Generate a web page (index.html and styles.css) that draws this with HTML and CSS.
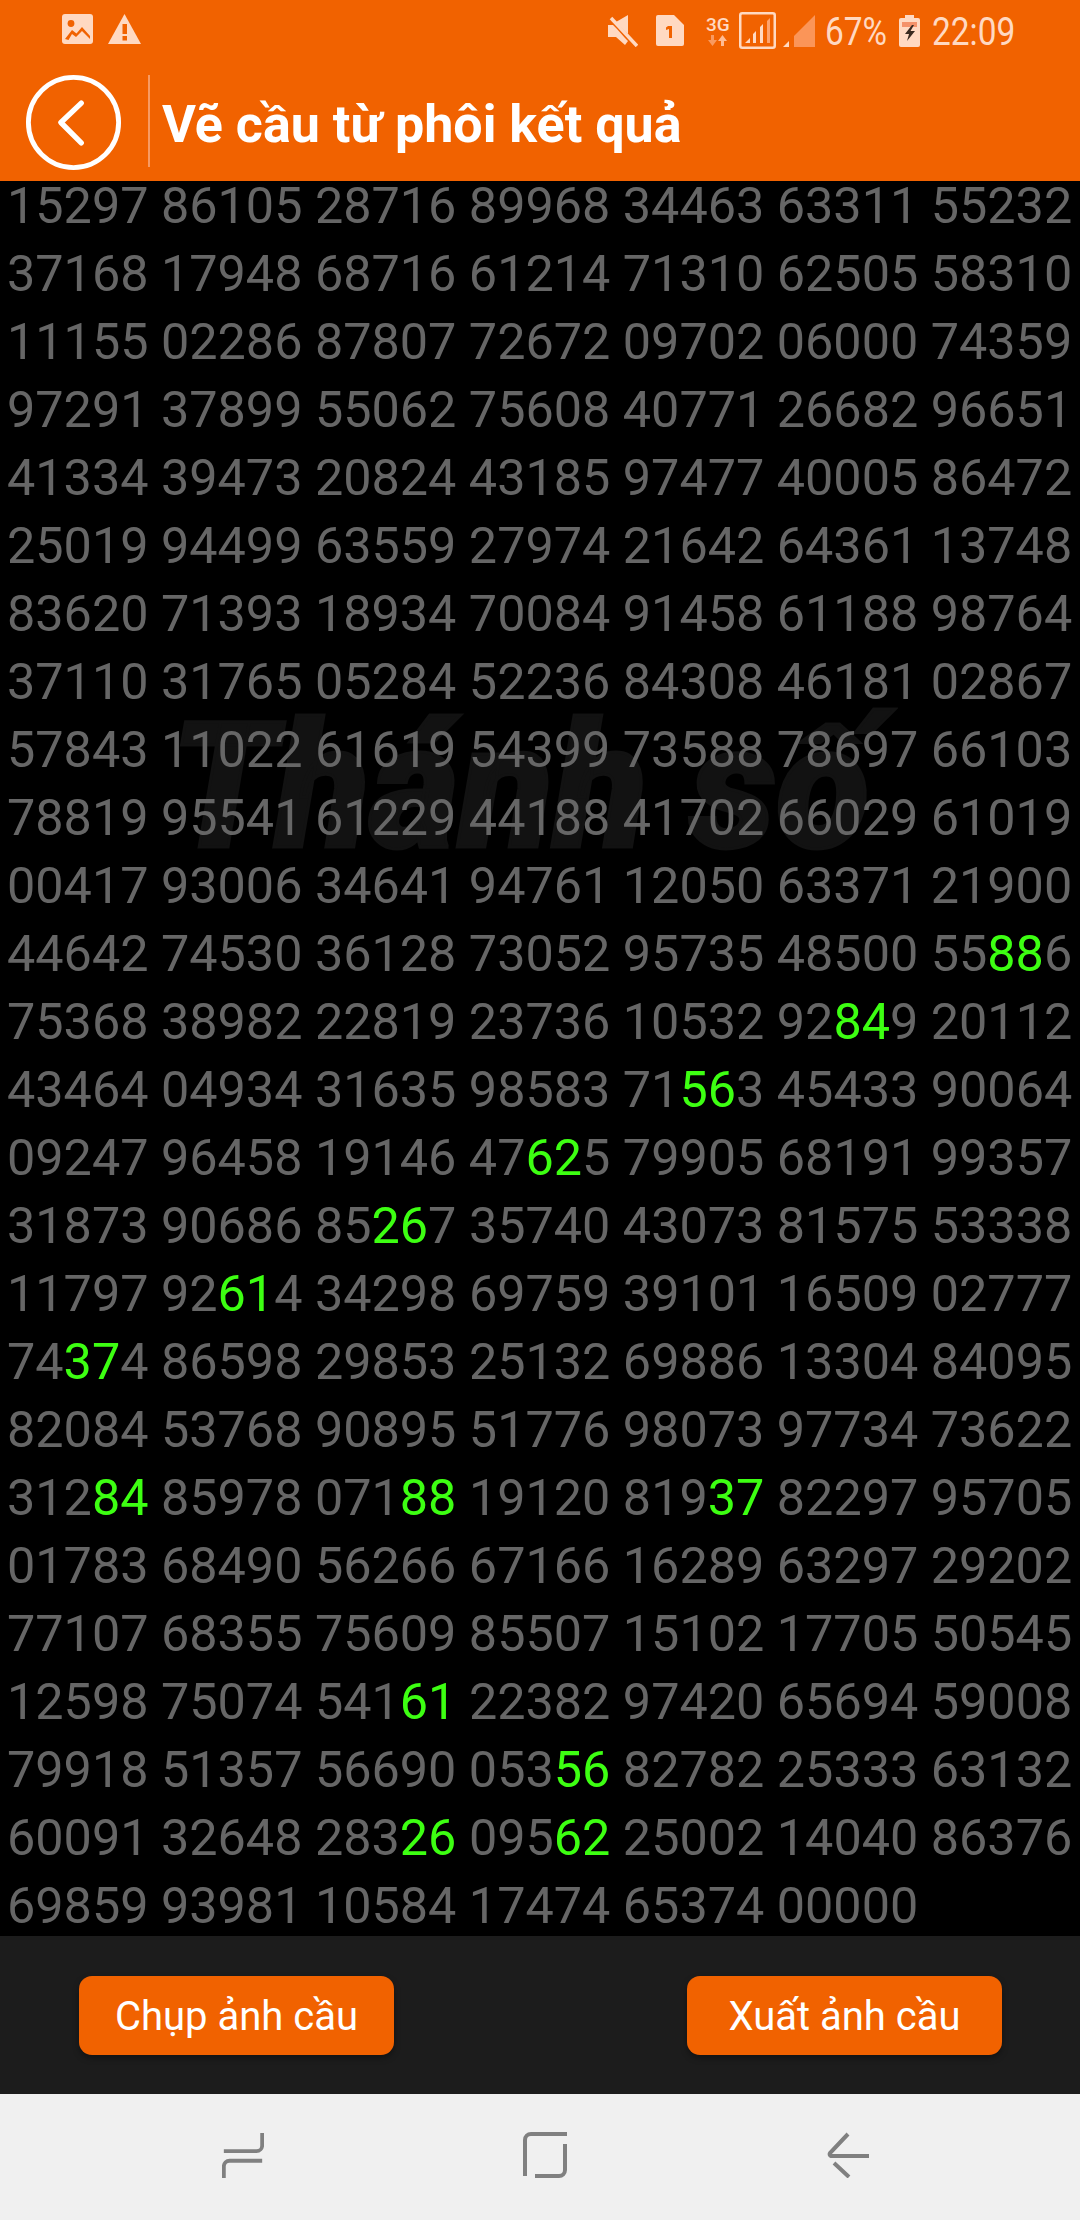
FILE: index.html
```html
<!DOCTYPE html>
<html lang="vi">
<head>
<meta charset="utf-8">
<title>Vẽ cầu từ phôi kết quả</title>
<link rel="stylesheet" href="styles.css">
</head>
<body>
<div class="app">
  <header class="header">
    <div class="status">
      <div class="status-left">
        <svg class="ic-photo" viewBox="0 0 31 30"><path fill="#ffd9c2" d="M3 0h25a3 3 0 0 1 3 3v24a3 3 0 0 1-3 3H3a3 3 0 0 1-3-3V3a3 3 0 0 1 3-3z"/><circle cx="9" cy="9.500" r="3.400" fill="#f16200"/><path fill="#f16200" d="M3 25l7-9 4.500 3.500L20 13l8 9v3l-8-8-6 6-4-3-3.500 6z"/></svg>
        <svg class="ic-warn" viewBox="0 0 33 30"><path fill="#ffd9c2" d="M16.500 0l16.500 30H0z"/><rect x="14.500" y="10" width="4.500" height="10" fill="#f16200"/><rect x="14.500" y="22" width="4.500" height="4.500" fill="#f16200"/></svg>
      </div>
      <div class="status-right">
        <svg class="ic-mute" viewBox="0 0 30 32"><path fill="#ffd9c2" d="M0 10h5l4 4 0 0 8 9v0l3 3-3 4-9-8H0zM8 7l12-7v19z"/><path stroke="#ffd9c2" stroke-width="3.500" d="M3 3l26 28"/></svg>
        <svg class="ic-sim" viewBox="0 0 28 31"><path fill="#ffd9c2" d="M2 0h16l10 10v19a2 2 0 0 1-2 2H2a2 2 0 0 1-2-2V2a2 2 0 0 1 2-2z"/><path fill="#f16200" d="M12 11h4v12h-3v-9l-3 1v-2.500z"/></svg>
        <div class="net"><span class="net-label">3G</span>
          <svg class="ic-arrows" viewBox="0 0 20 11"><path fill="#f99a5f" d="M3 0h3v5h3l-4.500 6L0 5h3z"/><path fill="#ffbb93" d="M13 6v5h3V6h3l-4.500-6L10 6z"/></svg>
        </div>
        <svg class="ic-signal" viewBox="0 0 37 37"><rect x="1.250" y="1.250" width="34.500" height="34.500" rx="2" fill="none" stroke="#ffd9c2" stroke-width="2.500"/><path fill="#ffd9c2" d="M6 31l5-5v5zM14 31v-9l3-3v12zM21 31V15l3-3v19z"/><path fill="#fda46f" d="M28 31V9l3-3v25z"/></svg>
        <svg class="ic-signal2" viewBox="0 0 32 32"><path fill="#ffd9c2" d="M0 32l6-6v6z"/><path fill="#fb9558" d="M11 32V21L32 0v32z"/></svg>
        <span class="stat-text pct">67%</span>
        <svg class="ic-batt" viewBox="0 0 21 32"><path fill="#ffd9c2" d="M6 0h9v3h4a2 2 0 0 1 2 2v25a2 2 0 0 1-2 2H2a2 2 0 0 1-2-2V5a2 2 0 0 1 2-2h4z"/><rect x="3" y="7" width="15" height="5" fill="#f4926a"/><path fill="#3a2a20" d="M13 10L6 19h4l-2 7 8-10h-4.500l3.500-6z"/></svg>
        <span class="stat-text clock">22:09</span>
      </div>
    </div>
    <div class="toolbar">
      <div class="back">
        <svg class="ic-back" viewBox="0 0 100 100"><circle cx="50" cy="50" r="46.500" fill="none" stroke="#fff" stroke-width="5"/><path d="M58 30L37 50l21 21" fill="none" stroke="#fff" stroke-width="5.500" stroke-linecap="round" stroke-linejoin="round"/></svg>
      </div>
      <div class="sep"></div>
      <h1 class="title">Vẽ cầu từ phôi kết quả</h1>
    </div>
  </header>

  <main class="board">
    <div class="mark">Thánh số</div>
    <div class="row">15297 86105 28716 89968 34463 63311 55232</div>
    <div class="row">37168 17948 68716 61214 71310 62505 58310</div>
    <div class="row">11155 02286 87807 72672 09702 06000 74359</div>
    <div class="row">97291 37899 55062 75608 40771 26682 96651</div>
    <div class="row">41334 39473 20824 43185 97477 40005 86472</div>
    <div class="row">25019 94499 63559 27974 21642 64361 13748</div>
    <div class="row">83620 71393 18934 70084 91458 61188 98764</div>
    <div class="row">37110 31765 05284 52236 84308 46181 02867</div>
    <div class="row">57843 11022 61619 54399 73588 78697 66103</div>
    <div class="row">78819 95541 61229 44188 41702 66029 61019</div>
    <div class="row">00417 93006 34641 94761 12050 63371 21900</div>
    <div class="row">44642 74530 36128 73052 95735 48500 55<b class="hit">88</b>6</div>
    <div class="row">75368 38982 22819 23736 10532 92<b class="hit">84</b>9 20112</div>
    <div class="row">43464 04934 31635 98583 71<b class="hit">56</b>3 45433 90064</div>
    <div class="row">09247 96458 19146 47<b class="hit">62</b>5 79905 68191 99357</div>
    <div class="row">31873 90686 85<b class="hit">26</b>7 35740 43073 81575 53338</div>
    <div class="row">11797 92<b class="hit">61</b>4 34298 69759 39101 16509 02777</div>
    <div class="row">74<b class="hit">37</b>4 86598 29853 25132 69886 13304 84095</div>
    <div class="row">82084 53768 90895 51776 98073 97734 73622</div>
    <div class="row">312<b class="hit">84</b> 85978 071<b class="hit">88</b> 19120 819<b class="hit">37</b> 82297 95705</div>
    <div class="row">01783 68490 56266 67166 16289 63297 29202</div>
    <div class="row">77107 68355 75609 85507 15102 17705 50545</div>
    <div class="row">12598 75074 541<b class="hit">61</b> 22382 97420 65694 59008</div>
    <div class="row">79918 51357 56690 053<b class="hit">56</b> 82782 25333 63132</div>
    <div class="row">60091 32648 283<b class="hit">26</b> 095<b class="hit">62</b> 25002 14040 86376</div>
    <div class="row">69859 93981 10584 17474 65374 00000</div>
  </main>

  <section class="actions">
    <button class="btn" type="button">Chụp ảnh cầu</button>
    <button class="btn" type="button">Xuất ảnh cầu</button>
  </section>

  <nav class="nav">
    <svg class="nav-ic" viewBox="0 0 42 48"><path d="M41 1v13a6 6 0 0 1-6 6H1M41 30H7a6 6 0 0 0-6 6v12" fill="none" stroke="#808080" stroke-width="4"/></svg>
    <svg class="nav-ic" viewBox="0 0 44 46"><path d="M2 44V8a6 6 0 0 1 6-6h36M42 12v26a6 6 0 0 1-6 6H12" fill="none" stroke="#808080" stroke-width="4"/></svg>
    <svg class="nav-ic" viewBox="0 0 42 46"><path d="M21 2L3 21a2 2 0 0 0 1 3h38M7 31l15 14" fill="none" stroke="#808080" stroke-width="4"/></svg>
  </nav>
</div>
</body>
</html>
```

FILE: styles.css
```css
* { box-sizing: border-box; }
html, body { margin: 0; padding: 0; background: #000; }
.app {
  width: 1080px;
  height: 2220px;
  display: flex;
  flex-direction: column;
  font-family: Roboto, "Noto Sans", sans-serif;
  overflow: hidden;
}
.header { height: 181px; background: #f16200; display: flex; flex-direction: column; flex: none; position: relative; z-index: 1; }
.status { height: 62px; display: flex; justify-content: space-between; padding: 14px 64px 0 62px; }
.status-left { display: flex; gap: 15px; align-items: flex-start; }
.status-right { display: flex; align-items: flex-start; }
.ic-photo { width: 31px; height: 30px; }
.ic-warn { width: 33px; height: 30px; }
.ic-mute { width: 30px; height: 32px; margin-top: 1px; }
.ic-sim { width: 28px; height: 31px; margin: 1px 0 0 18px; }
.net { width: 24px; margin: 1px 0 0 22px; display: flex; flex-direction: column; align-items: center; color: #ffd9c2; }
.net-label { font-size: 19px; line-height: 20px; font-weight: 500; }
.ic-arrows { width: 20px; height: 11px; }
.ic-signal { width: 37px; height: 37px; margin: -2px 0 0 9px; }
.ic-signal2 { width: 32px; height: 32px; margin: 1px 0 0 7px; }
.stat-text { color: #ffd9c2; font-size: 38px; line-height: 38px; transform: scaleX(0.88); transform-origin: left center; }
.pct { margin: -1px -8px 0 10px; }
.ic-batt { width: 21px; height: 32px; margin: 1px 0 0 12px; }
.clock { margin: -1px -11px 0 12px; }

.toolbar { height: 119px; display: flex; align-items: flex-start; padding: 12px 0 0 25px; }
.back { width: 97px; height: 97px; flex: none; }
.ic-back { width: 97px; height: 97px; display: block; }
.sep { width: 2px; height: 92px; margin: 1px 0 0 26px; background: #f89a62; flex: none; }
.title { margin: 3px 0 0 12px; color: #fff; font-size: 52px; line-height: 96px; font-weight: 700; white-space: nowrap; }

.board { position: relative; flex: none; height: 1755px; background: #000; padding-left: 7px; }
.row {
  position: relative;
  height: 68px;
  line-height: 50px;
  font-size: 50.350px;
  color: #666;
  white-space: pre;
}
.hit { font-weight: 400; color: #3dff12; }
.mark {
  position: absolute;
  left: 170px;
  top: 518px;
  font-size: 176px;
  line-height: 176px;
  font-weight: 900;
  font-style: italic;
  color: #121212;
  -webkit-text-stroke: 3px #121212;
  white-space: nowrap;
  transform: scaleX(0.98);
  transform-origin: left top;
}

.actions { flex: none; height: 158px; background: #1c1c1c; display: flex; justify-content: space-between; padding: 40px 78px 0 79px; align-items: flex-start; position: relative; z-index: 1; }
.btn {
  width: 315px;
  height: 79px;
  border: 0;
  border-radius: 13px;
  background: #f16200;
  color: #fff;
  font-family: Roboto, sans-serif;
  font-size: 40px;
  line-height: 82px;
  padding: 0;
  box-shadow: 0 3px 6px rgba(0,0,0,.35);
}

.nav { flex: none; height: 126px; background: #f0f0f0; position: relative; display: grid; grid-template-columns: 42px 44px 42px; justify-content: start; padding: 38px 0 0 222px; column-gap: 0; }
.nav-ic { width: 100%; height: 46px; }
.nav-ic:nth-child(2) { margin-left: 259px; }
.nav-ic:nth-child(3) { margin-left: 519px; }
```
